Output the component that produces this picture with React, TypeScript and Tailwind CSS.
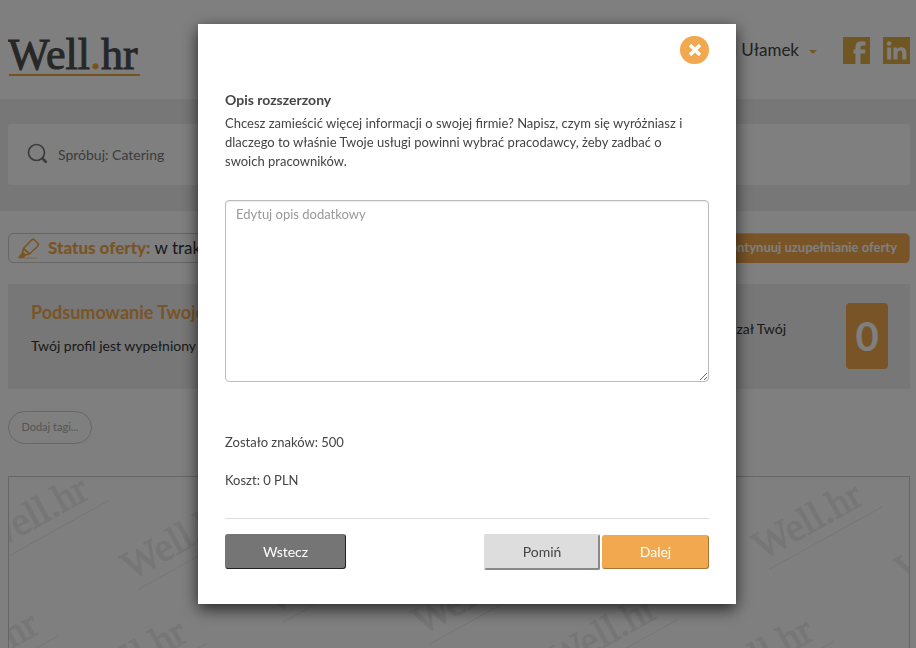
import { useState } from "react";

const MAX_CHARS = 500;

// Start point of the underline of each watermark, relative to the gallery box
const WATERMARKS = [
  [-14, 86],
  [129, 112],
  [-64, 221],
  [84, 229],
  [272, 146],
  [420, 167],
  [555, 205],
  [760, 92],
  [903, 115],
  [711, 227],
];

function Logo() {
  return (
    <svg className="h-14 w-36" viewBox="0 0 144 56" role="img" aria-label="Well.hr">
      <text
        x="0"
        y="47"
        fill="#4f4f4f"
        stroke="#4f4f4f"
        strokeWidth="1"
        className="font-['Liberation_Serif',serif] text-[44px]"
      >
        Well
        <tspan fill="#f0a93a" stroke="#f0a93a">
          .
        </tspan>
        hr
      </text>
      <rect x="1" y="52" width="131" height="2" fill="#e8a63a" />
    </svg>
  );
}

function Watermark() {
  return (
    <svg className="absolute inset-0 h-full w-full" aria-hidden="true">
      {WATERMARKS.map(([x, y]) => (
        <g key={`${x}-${y}`} transform={`translate(${x} ${y}) rotate(-29)`} fill="#ececec">
          <text
            x="-2"
            y="-11"
            stroke="#ececec"
            strokeWidth="1"
            className="font-['Liberation_Serif',serif] text-[40px]"
          >
            Well.hr
          </text>
          <rect width="130" height="1" />
        </g>
      ))}
    </svg>
  );
}

function PencilIcon() {
  return (
    <svg className="h-6 w-6" viewBox="0 0 24 24" fill="none" stroke="#f2a84e" strokeWidth="1.700" strokeLinejoin="round">
      <path d="M14.500 4 L16.500 3 L21.500 8 L20.500 10.500 L12.500 18 L8 19 L5.500 16.500 L6.500 12.500 Z" />
      <path d="M6.500 12.500 L12.500 18" />
      <path d="M5.500 17 L2 21.500 L6 21.500 L8 19 Z" fill="#f2a84e" />
      <path d="M7 22 H20" strokeWidth="1" opacity="0.6" />
    </svg>
  );
}

function SearchIcon() {
  return (
    <svg className="h-6 w-6" viewBox="0 0 24 24" fill="none" stroke="#777777" strokeWidth="1.700">
      <circle cx="10.500" cy="9.500" r="8" />
      <path d="M16 15 L20.500 19.500" strokeWidth="2.500" />
    </svg>
  );
}

function Header() {
  return (
    <header className="flex h-[99px] items-start justify-between pr-1.5 pl-2">
      <a href="#" className="mt-[22px]">
        <Logo />
      </a>
      <div className="mt-9 flex items-center">
        <button type="button" className="flex items-center gap-2.5 text-[17px] text-[#444]">
          Anna Ułamek
          <span className="mt-1 border-x-4 border-t-4 border-x-transparent border-t-[#f2a84e]" />
        </button>
        <a href="#" aria-label="Facebook" className="ml-[26px]">
          <svg className="h-7 w-[27px]" viewBox="0 0 27 28">
            <rect width="27" height="27" y="1" fill="#e0ac42" />
            <path
              d="M12.500 28 V17.500 H10.500 V13.500 H12.500 V11 C12.500 7.500 14.500 5.500 18 5.500 H22.500 V9.500 H19.500 C18 9.500 17.500 10.200 17.500 11.500 V13.500 H22.500 L22 17.500 H17.500 V28 Z"
              fill="#fff"
            />
          </svg>
        </a>
        <a href="#" aria-label="LinkedIn" className="ml-[13px]">
          <svg className="h-7 w-[27px]" viewBox="0 0 27 28">
            <rect width="27" height="27" y="1" fill="#e0ac42" />
            <circle cx="6.200" cy="7.500" r="2.300" fill="#fff" />
            <path
              d="M4.200 11.500 H8.200 V23.500 H4.200 Z M10.500 11.500 H14.300 V13.200 C15.200 11.800 16.500 11.200 18.300 11.200 C21.800 11.200 23.300 13.300 23.300 16.800 V23.500 H19.300 V17.500 C19.300 15.700 18.700 14.600 17.100 14.600 C15.300 14.600 14.500 15.800 14.500 17.600 V23.500 H10.500 Z"
              fill="#fff"
            />
          </svg>
        </a>
      </div>
    </header>
  );
}

function DescriptionDialog() {
  const [description, setDescription] = useState("");

  return (
    <div className="fixed inset-0 flex items-start justify-center bg-black/50 pt-6 pl-[18px]">
      <div
        role="dialog"
        aria-modal="true"
        aria-labelledby="dialog-title"
        className="w-[538px] bg-white px-[27px] pt-3 pb-[34px] text-[13px] leading-[19px] text-[#444] shadow-[0_5px_15px_rgba(0,0,0,0.7)]"
      >
        <div className="flex justify-end">
          <button
            type="button"
            aria-label="Zamknij"
            className="flex h-7 w-[29px] items-center justify-center rounded-full bg-[#f2a84e]"
          >
            <svg className="h-3 w-3" viewBox="0 0 12 12" stroke="#fff" strokeWidth="3.500">
              <path d="M1 1 L11 11 M11 1 L1 11" />
            </svg>
          </button>
        </div>

        <h2 id="dialog-title" className="mt-[26px] text-sm leading-[19px] font-bold">
          Opis rozszerzony
        </h2>
        <p className="mt-[5px] pr-3">
          Chcesz zamieścić więcej informacji o swojej firmie? Napisz, czym się wyróżniasz i dlaczego to właśnie Twoje
          usługi powinni wybrać pracodawcy, żeby zadbać o swoich pracowników.
        </p>

        <textarea
          aria-label="Opis dodatkowy"
          placeholder="Edytuj opis dodatkowy"
          maxLength={MAX_CHARS}
          value={description}
          onChange={(e) => setDescription(e.target.value)}
          className="mt-[29px] block h-[182px] w-full rounded border border-[#bbb] px-2.5 py-1 shadow-[inset_0_1px_1px_rgba(0,0,0,0.08)] placeholder:text-[#999]"
        />

        <p className="mt-[51px]">Zostało znaków: {MAX_CHARS - description.length}</p>
        <p className="mt-[19px]">Koszt: 0 PLN</p>

        <div className="mt-7 flex items-start justify-between border-t border-[#ddd] pt-[15px] text-sm">
          <button
            type="button"
            className="h-[35px] w-[121px] rounded-[3px] border border-t-[#757575] border-r-[#222] border-b-[#222] border-l-[#757575] bg-[#757575] text-white"
          >
            Wstecz
          </button>
          <div className="flex items-center gap-0.5">
            <button
              type="button"
              className="h-9 w-[116px] rounded-[2px] border-2 border-t-[#ddd] border-r-[#888] border-b-[#888] border-l-[#ddd] bg-[#ddd]"
            >
              Pomiń
            </button>
            <button
              type="button"
              className="h-[34px] w-[107px] rounded-[3px] border border-t-[#f2a84e] border-r-[#a87433] border-b-[#a87433] border-l-[#f2a84e] bg-[#f2a84e] text-white"
            >
              Dalej
            </button>
          </div>
        </div>
      </div>
    </div>
  );
}

export default function App() {
  return (
    <div className="flex h-screen flex-col overflow-hidden bg-white font-[Lato,sans-serif] text-[#333]">
      <Header />

      <div className="bg-[#efefef] pt-[25px] pr-1.5 pb-[26px] pl-2">
        <label className="flex h-[61px] items-center gap-2 rounded-[3px] bg-white pl-[18px]">
          <SearchIcon />
          <input
            type="search"
            aria-label="Szukaj"
            placeholder="Spróbuj: Catering"
            className="flex-1 text-sm placeholder:text-[#777]"
          />
        </label>
      </div>

      <main className="flex flex-1 flex-col pt-[22px] pr-1.5 pl-2">
        <div className="flex h-[30px] items-center justify-between rounded-[5px] border border-[#ccc] pl-2">
          <p className="flex items-center gap-[7px] text-[17px]">
            <PencilIcon />
            <span>
              <strong className="font-black text-[#f2a84e]">Status oferty:</strong> w trakcie
            </span>
          </p>
          <button type="button" className="h-[29px] rounded bg-[#f2a84e] px-3 text-[13px] font-bold text-white">
            Kontynuuj uzupełnianie oferty
          </button>
        </div>

        <section className="mt-[21px] flex h-[105px] items-start justify-between bg-[#efefef] pr-[22px] pl-[23px]">
          <div className="pt-4">
            <h1 className="text-lg leading-6 font-bold text-[#f2a84e]">Podsumowanie Twojej</h1>
            <p className="mt-3 text-sm leading-5">Twój profil jest wypełniony</p>
          </div>
          <div className="flex gap-[60px] pt-[19px]">
            <p className="pt-4 text-sm leading-5">pokazał Twój</p>
            <strong className="flex h-[66px] w-[42px] items-center justify-center rounded bg-[#f2a84e] text-[40px] text-white">
              0
            </strong>
          </div>
        </section>

        <button
          type="button"
          className="mt-[22px] h-[33px] w-[84px] shrink-0 rounded-full border border-[#ccc] text-[11px] text-[#aaa]"
        >
          Dodaj tagi...
        </button>

        <div className="relative mt-8 flex-1 overflow-hidden border border-b-0 border-[#ccc]">
          <Watermark />
        </div>
      </main>

      <DescriptionDialog />
    </div>
  );
}
